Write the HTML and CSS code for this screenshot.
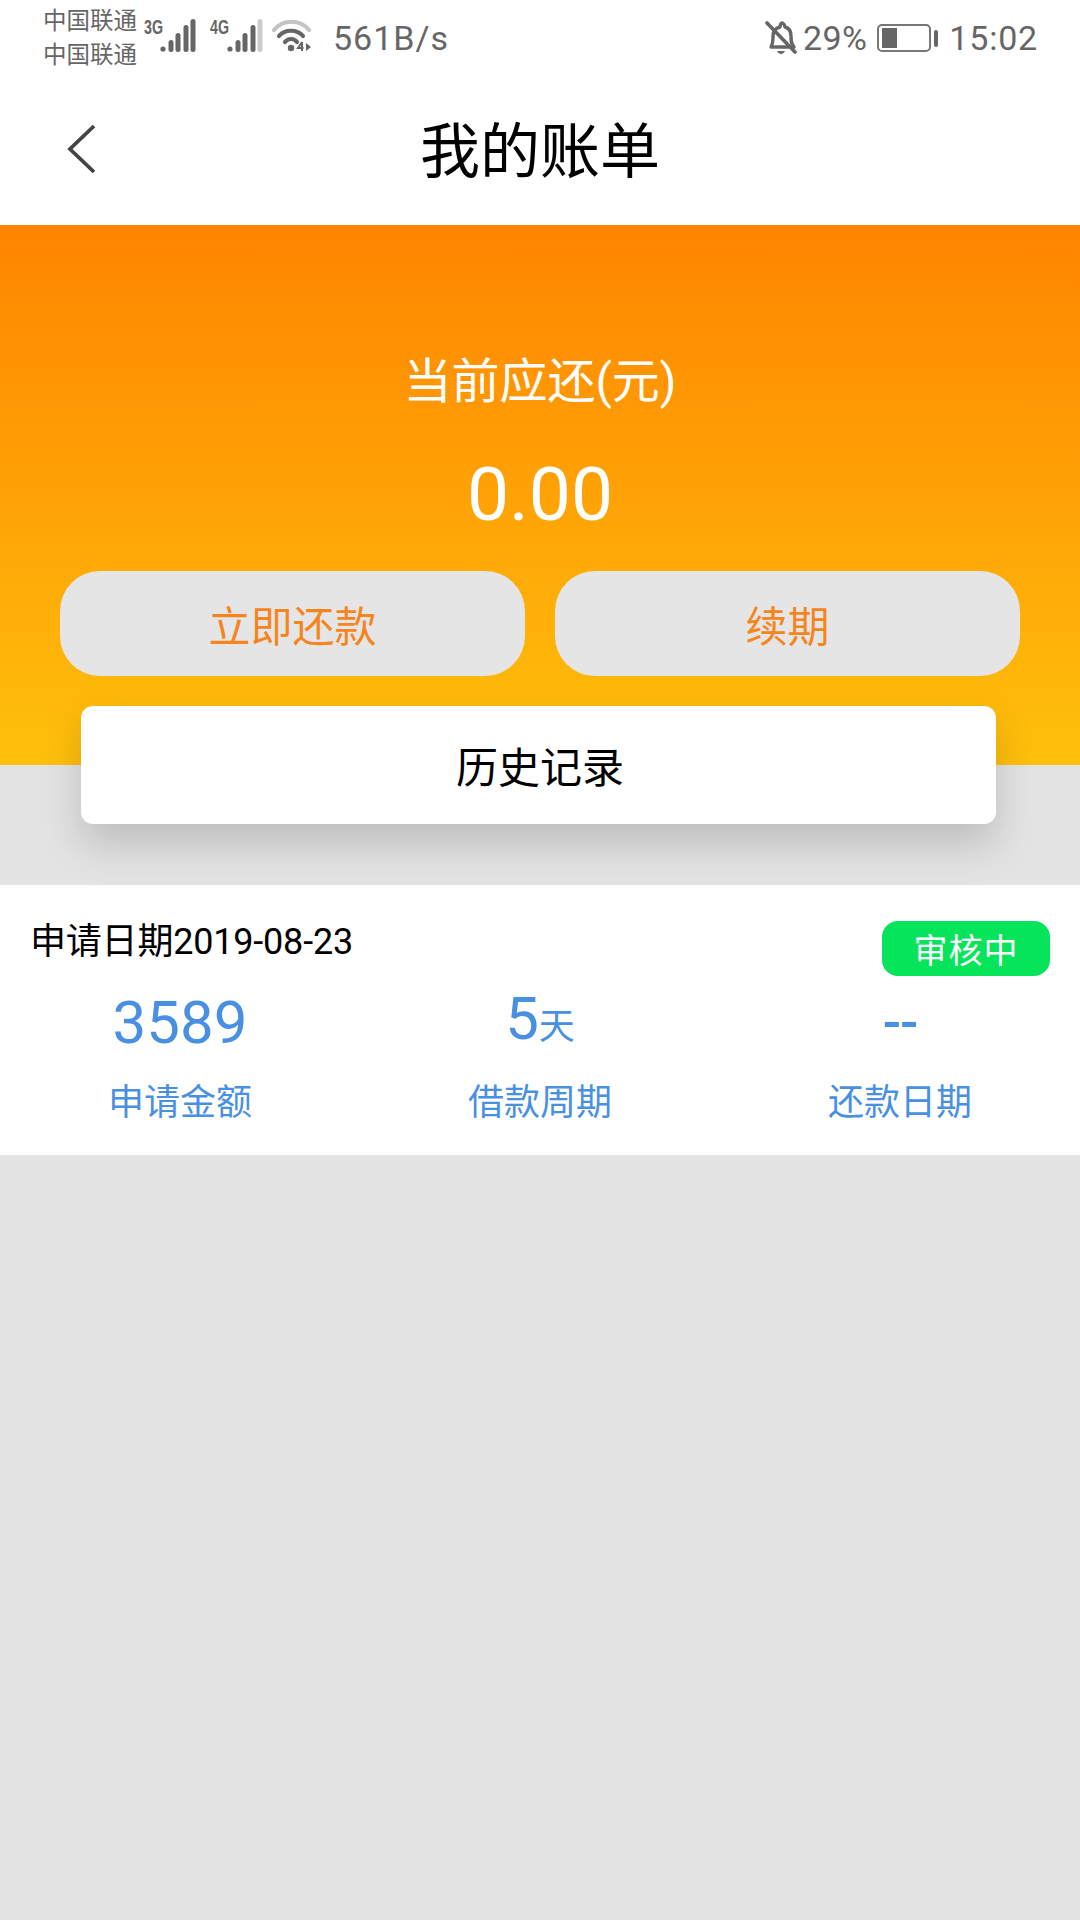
FILE: index.html
```html
<!DOCTYPE html>
<html lang="zh-CN">
<head>
<meta charset="utf-8">
<title>我的账单</title>
<link rel="stylesheet" href="styles.css">
</head>
<body>
<div class="page">
  <header class="status">
    <div class="status-left">
      <div class="carriers"><span>中国联通</span><span>中国联通</span></div>
      <svg class="sig" width="56" height="40" viewBox="0 0 56 40">
        <text class="net" x="0" y="18" textLength="19" lengthAdjust="spacingAndGlyphs">3G</text>
        <g fill="#666"><circle cx="19" cy="33" r="2.600"/><rect x="24.500" y="24" width="5" height="12" rx="2.500"/><rect x="31.500" y="17" width="5" height="19" rx="2.500"/><rect x="39.500" y="9" width="5" height="27" rx="2.500"/><rect x="46.500" y="3" width="5" height="33" rx="2.500"/></g>
      </svg>
      <svg class="sig" width="56" height="40" viewBox="0 0 56 40">
        <text class="net" x="0" y="18" textLength="19" lengthAdjust="spacingAndGlyphs">4G</text>
        <g fill="#666"><circle cx="20" cy="33" r="2.600"/><rect x="25.500" y="24" width="5" height="12" rx="2.500"/><rect x="32.500" y="17" width="5" height="19" rx="2.500"/><rect x="40.500" y="9" width="5" height="27" rx="2.500"/></g>
        <rect x="47.500" y="3" width="5" height="33" rx="2.500" fill="#ccc"/>
      </svg>
      <svg class="wifi" width="40" height="36" viewBox="0 0 40 36">
        <path d="M2 11C11 0 28 0 37 11" fill="none" stroke="#c4c4c4" stroke-width="4.200" stroke-linecap="round"/>
        <path d="M7 17C13 10 25 10 31 17" fill="none" stroke="#666" stroke-width="4.200" stroke-linecap="round"/>
        <path d="M13 23C16 19 22 19 25 23" fill="none" stroke="#666" stroke-width="4.200" stroke-linecap="round"/>
        <circle cx="19" cy="29" r="3.200" fill="#666"/>
        <path d="M30 23l-4 6h5.500M30 23v9" fill="none" stroke="#666" stroke-width="2"/>
        <path d="M34 24v8l5-4z" fill="#666"/>
      </svg>
      <span class="speed">561B/s</span>
    </div>
    <div class="status-right">
      <svg class="bell" width="32" height="36" viewBox="0 0 32 36">
        <path d="M6 27c2-3 2-6 2-11 0-5 3-8 7-9 0-2 1-4 2-4s3 2 3 4c4 1 6 4 6 9 0 5 0 8 3 11z" fill="none" stroke="#666" stroke-width="3.400" stroke-linejoin="round"/>
        <path d="M2 3l28 29" stroke="#666" stroke-width="3.600" stroke-linecap="round"/>
        <path d="M12 31c2 4 6 4 8 0z" fill="#666"/>
      </svg>
      <span class="pct">29%</span>
      <div class="battery"><div class="battery-body"><div class="battery-fill"></div></div><div class="battery-cap"></div></div>
      <span class="clock">15:02</span>
    </div>
  </header>

  <nav class="nav">
    <svg class="back" width="32" height="52" viewBox="0 0 32 52">
      <path d="M28 3L4 26l24 23" fill="none" stroke="#444" stroke-width="3.800"/>
    </svg>
    <h1 class="title">我的账单</h1>
  </nav>

  <section class="hero">
    <div class="hero-label">当前应还(元)</div>
    <div class="hero-amount">0.00</div>
    <div class="actions">
      <button class="action">立即还款</button>
      <button class="action">续期</button>
    </div>
  </section>

  <div class="history">历史记录</div>

  <article class="bill">
    <div class="bill-head">
      <span class="bill-date">申请日期2019-08-23</span>
      <span class="badge">审核中</span>
    </div>
    <div class="bill-cols">
      <div class="col">
        <div class="val">3589</div>
        <div class="lab">申请金额</div>
      </div>
      <div class="col">
        <div class="val"><span class="val-up">5</span><span class="unit">天</span></div>
        <div class="lab">借款周期</div>
      </div>
      <div class="col">
        <div class="val val-dash">--</div>
        <div class="lab">还款日期</div>
      </div>
    </div>
  </article>
</div>
</body>
</html>
```
FILE: styles.css
```css
* { box-sizing: border-box; }
html, body { margin: 0; padding: 0; }
body {
  width: 1080px;
  height: 1920px;
  overflow: hidden;
  background: #e3e3e3;
  font-family: Roboto, "Noto Sans CJK SC", sans-serif;
}
.page { display: flex; flex-direction: column; width: 1080px; height: 1920px; }

.status {
  height: 76px;
  background: #fff;
  display: flex;
  justify-content: space-between;
  align-items: center;
  padding: 0 42px 0 43px;
  color: #666;
  flex: none;
}
.status-left, .status-right { display: flex; align-items: center; }
.carriers { display: flex; flex-direction: column; font-size: 23.500px; line-height: 34px; width: 101px; margin-top: -1px; }
.sig { margin-right: 10px; margin-top: -4px; }
.net { font-family: "Liberation Sans", sans-serif; font-size: 20px; font-weight: 700; fill: #666; }
.wifi { margin-left: -4px; margin-top: -2px; }
.speed { font-size: 34px; margin-left: 21px; letter-spacing: 1px; }
.bell { margin-right: 6px; }
.pct { font-size: 34px; letter-spacing: .4px; }
.battery { display: flex; align-items: center; margin: 0 11px 0 10px; }
.battery-body { width: 54px; height: 28px; border: 2px solid #777; border-radius: 5px; padding: 2px 3px; }
.battery-fill { width: 15px; height: 100%; background: #666; }
.battery-cap { width: 4px; height: 17px; background: #666; margin-left: 3px; border-radius: 2px; }
.clock { font-size: 34px; letter-spacing: .8px; }

.nav {
  height: 149px;
  background: #fff;
  position: relative;
  display: flex;
  align-items: center;
  justify-content: center;
  padding-top: 4px;
  flex: none;
}
.back { position: absolute; left: 66px; top: 47px; }
.title { margin: 0; font-size: 60px; font-weight: 400; color: #000; line-height: 1; }

.hero {
  height: 540px;
  flex: none;
  background: linear-gradient(180deg, #ff8400 0%, #ffc00c 100%);
  padding-top: 129px;
  color: #fff;
  text-align: center;
}
.hero-label { font-size: 48px; line-height: 56px; height: 56px; }
.hero-amount { font-size: 75px; line-height: 84px; margin-top: 42px; }
.actions { display: flex; gap: 30px; padding: 0 60px; margin-top: 35px; }
.action {
  flex: 1;
  height: 105px;
  border: 0;
  border-radius: 40px;
  background: #e5e5e5;
  color: #f5861f;
  font: inherit;
  font-size: 42px;
}

.history {
  flex: none;
  width: 915px;
  height: 118px;
  margin: -59px 0 0 81px;
  padding-left: 3px;
  padding-bottom: 2px;
  background: #fff;
  border-radius: 12px;
  display: flex;
  align-items: center;
  justify-content: center;
  font-size: 42px;
  color: #000;
  box-shadow: 0 20px 40px rgba(0, 0, 0, .17);
}

.bill {
  flex: none;
  margin-top: 61px;
  height: 270px;
  background: #fff;
  padding: 0 30px;
  position: relative;
}
.bill-head { display: flex; justify-content: space-between; align-items: flex-start; }
.bill-date { font-size: 36px; line-height: 42px; color: #000; margin-top: 36px; letter-spacing: -.2px; }
.badge {
  width: 168px;
  height: 55px;
  margin-top: 36px;
  background: #05e45a;
  color: #fff;
  border-radius: 16px;
  font-size: 34px;
  display: flex;
  align-items: center;
  justify-content: center;
  letter-spacing: 1px;
}
.bill-cols { display: grid; grid-template-columns: repeat(3, 360px); margin: 12px -30px 0; }
.col { display: flex; flex-direction: column; align-items: center; color: #4a90e2; }
.val { font-size: 60px; line-height: 70px; height: 70px; display: flex; align-items: baseline; }
.val-up { margin-top: -4px; }
.val-dash { font-size: 54px; font-weight: 500; letter-spacing: -1px; }
.unit { font-size: 36px; }
.lab { font-size: 36px; line-height: 42px; margin-top: 24px; }
```
